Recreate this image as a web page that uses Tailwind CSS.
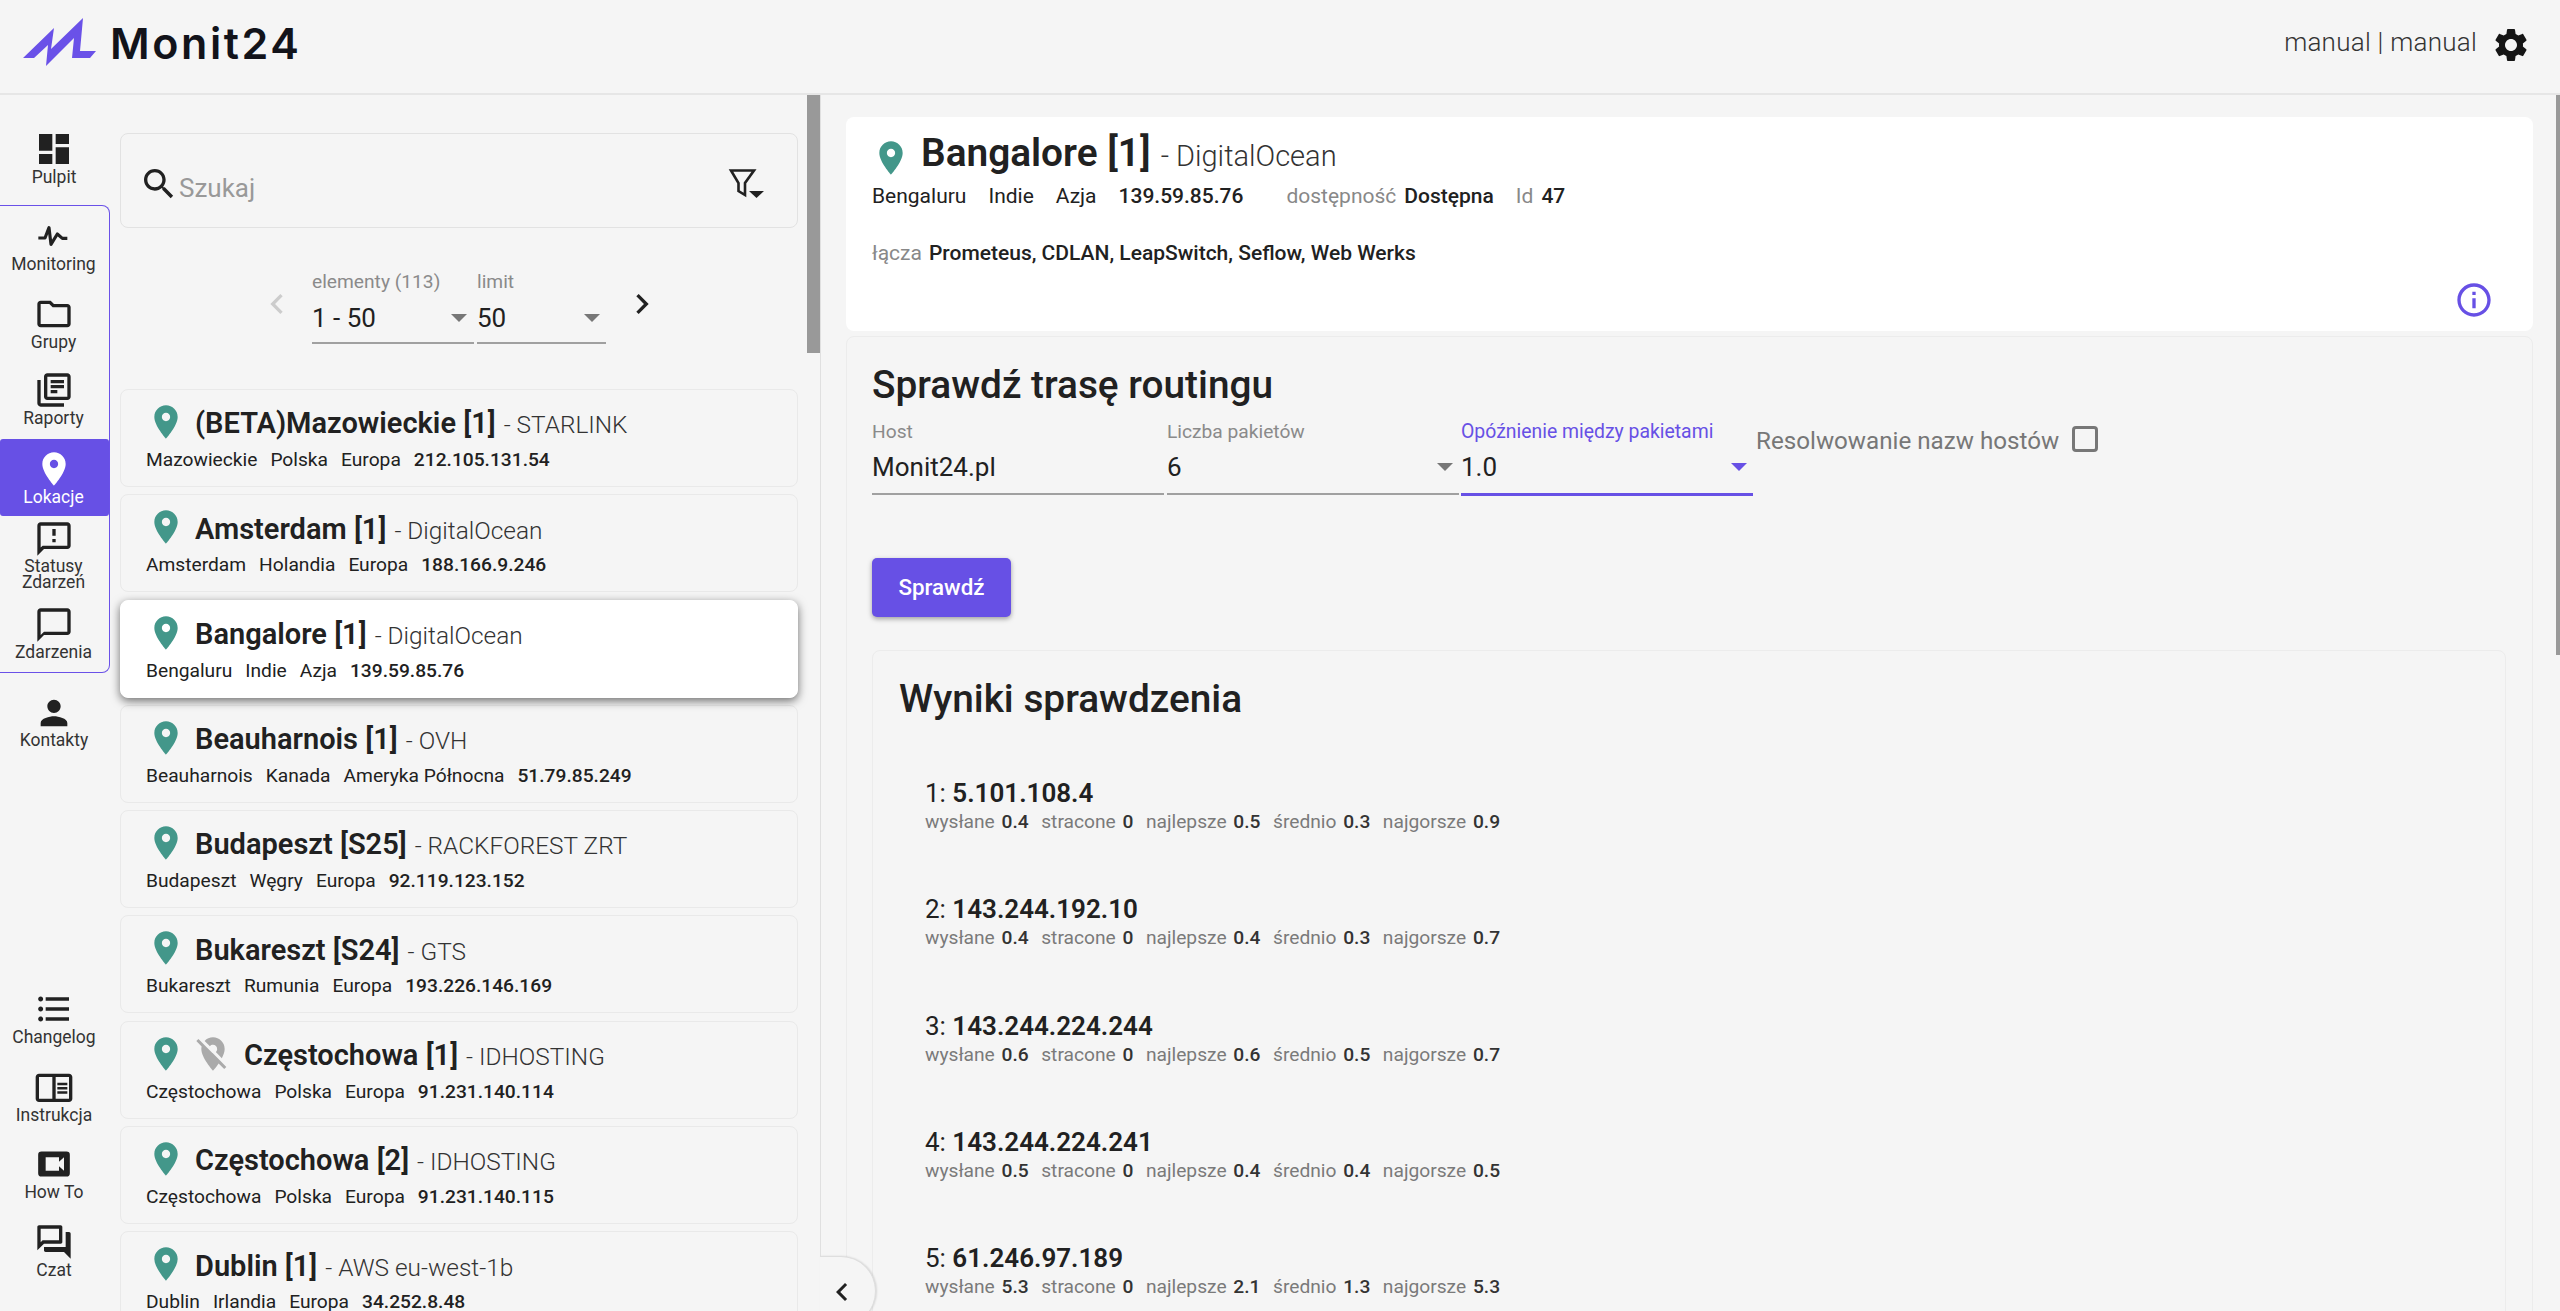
<!DOCTYPE html>
<html lang="pl">
<head>
    <meta charset="UTF-8">
    <title>Monit24</title>
    <script src="https://cdn.jsdelivr.net/npm/@tailwindcss/browser@4"></script>
</head>
<body class="bg-[#f5f5f5] font-[Roboto,sans-serif] text-[#212121] h-[1311px] overflow-hidden">
    <!-- icons -->
    <svg class="hidden">
        <symbol id="i-dashboard" viewBox="0 0 24 24"><path d="M3 13h8V3H3v10zm0 8h8v-6H3v6zm10 0h8V11h-8v10zm0-18v6h8V3h-8z"/></symbol>
        <symbol id="i-pulse" viewBox="0 0 24 24"><path fill="none" stroke="currentColor" stroke-width="1.9" stroke-linejoin="round" d="M2.6 13.2H6.6L9 7l1.2 10L14 10.8l3 2.6h3"/></symbol>
        <symbol id="i-folder" viewBox="0 0 24 24"><path d="M9.17 6l2 2H20v10H4V6h5.17M10 4H4c-1.1 0-1.99.9-1.99 2L2 18c0 1.1.9 2 2 2h16c1.1 0 2-.9 2-2V8c0-1.1-.9-2-2-2h-8l-2-2z"/></symbol>
        <symbol id="i-books" viewBox="0 0 24 24"><path d="M4 6H2v14c0 1.1.9 2 2 2h14v-2H4V6zm16-4H8c-1.1 0-2 .9-2 2v12c0 1.1.9 2 2 2h12c1.1 0 2-.9 2-2V4c0-1.1-.9-2-2-2zm0 14H8V4h12v12zM10 9h8v2h-8zm0 3h4v2h-4zm0-6h8v2h-8z"/></symbol>
        <symbol id="i-place" viewBox="0 0 24 24"><path d="M12 2C8.13 2 5 5.13 5 9c0 5.25 7 13 7 13s7-7.75 7-13c0-3.87-3.13-7-7-7zm0 9.5c-1.38 0-2.5-1.12-2.5-2.5s1.12-2.5 2.5-2.5 2.5 1.12 2.5 2.5-1.12 2.5-2.5 2.5z"/></symbol>
        <symbol id="i-place-off" viewBox="0 0 24 24"><path d="M12 6.5c1.38 0 2.5 1.12 2.5 2.5 0 .74-.33 1.39-.83 1.85l3.63 3.63c.98-1.86 1.7-3.8 1.7-5.48 0-3.87-3.13-7-7-7-1.98 0-3.76.83-5.03 2.15l3.19 3.19c.46-.52 1.11-.84 1.84-.84zm4.37 9.6l-4.63-4.63-.11-.11L3.27 3 2 4.27l3.18 3.18C5.07 7.95 5 8.47 5 9c0 5.25 7 13 7 13s1.67-1.85 3.38-4.35L18.73 21 20 19.73l-3.63-3.63z"/></symbol>
        <symbol id="i-sms" viewBox="0 0 24 24"><path d="M20 2H4c-1.1 0-1.99.9-1.99 2L2 22l4-4h14c1.1 0 2-.9 2-2V4c0-1.1-.9-2-2-2zm0 14H5.17L4 17.17V4h16v12zM11 12h2v2h-2zm0-6h2v4h-2z"/></symbol>
        <symbol id="i-chat" viewBox="0 0 24 24"><path d="M20 2H4c-1.1 0-2 .9-2 2v18l4-4h14c1.1 0 2-.9 2-2V4c0-1.1-.9-2-2-2zm0 14H6l-2 2V4h16v12z"/></symbol>
        <symbol id="i-person" viewBox="0 0 24 24"><path d="M12 12c2.21 0 4-1.79 4-4s-1.79-4-4-4-4 1.79-4 4 1.79 4 4 4zm0 2c-2.67 0-8 1.34-8 4v2h16v-2c0-2.66-5.33-4-8-4z"/></symbol>
        <symbol id="i-list" viewBox="0 0 24 24"><path d="M4 10.5c-.83 0-1.5.67-1.5 1.5s.67 1.5 1.5 1.5 1.5-.67 1.5-1.5-.67-1.5-1.5-1.5zm0-6c-.83 0-1.5.67-1.5 1.5S3.17 7.5 4 7.5 5.5 6.83 5.5 6 4.83 4.5 4 4.5zm0 12c-.83 0-1.5.68-1.5 1.5s.68 1.5 1.5 1.5 1.5-.68 1.5-1.5-.67-1.5-1.5-1.5zM7 19h14v-2H7v2zm0-6h14v-2H7v2zm0-8v2h14V5H7z"/></symbol>
        <symbol id="i-reader" viewBox="0 0 24 24"><path d="M21 4H3c-1.1 0-2 .9-2 2v13c0 1.1.9 2 2 2h18c1.1 0 2-.9 2-2V6c0-1.1-.9-2-2-2zM3 19V6h8v13H3zm18 0h-8V6h8v13zm-7-9.5h6V11h-6zm0 2.5h6v1.5h-6zm0 2.5h6V16h-6z"/></symbol>
        <symbol id="i-video" viewBox="0 0 24 24"><path fill-rule="evenodd" d="M4.500 4.500h15a2 2 0 0 1 2 2v11a2 2 0 0 1-2 2h-15a2 2 0 0 1-2-2v-11a2 2 0 0 1 2-2zM7 8v8h8v-2.600l3 2.600V8l-3 2.600V8z"/></symbol>
        <symbol id="i-forum" viewBox="0 0 24 24"><path d="M15 4v7H5.17L4 12.17V4h11m1-2H3c-.55 0-1 .45-1 1v14l4-4h10c.55 0 1-.45 1-1V3c0-.55-.45-1-1-1zm5 4h-2v9H6v2c0 .55.45 1 1 1h11l4 4V7c0-.55-.45-1-1-1z"/></symbol>
        <symbol id="i-search" viewBox="0 0 24 24"><path d="M15.5 14h-.79l-.28-.27C15.41 12.59 16 11.11 16 9.5 16 5.91 13.09 3 9.5 3S3 5.91 3 9.5 5.91 16 9.5 16c1.61 0 3.09-.59 4.23-1.57l.27.28v.79l5 4.99L20.49 19l-4.99-5zm-6 0C7.01 14 5 11.99 5 9.5S7.01 5 9.5 5 14 7.01 14 9.5 11.99 14 9.5 14z"/></symbol>
        <symbol id="i-gear" viewBox="0 0 24 24"><path d="M19.14 12.94c.04-.3.06-.61.06-.94 0-.32-.02-.64-.07-.94l2.03-1.58c.18-.14.23-.41.12-.61l-1.92-3.32c-.12-.22-.37-.29-.59-.22l-2.39.96c-.5-.38-1.03-.7-1.62-.94l-.36-2.54c-.04-.24-.24-.41-.48-.41h-3.84c-.24 0-.43.17-.47.41l-.36 2.54c-.59.24-1.13.57-1.62.94l-2.39-.96c-.22-.08-.47 0-.59.22L2.74 8.87c-.12.21-.08.47.12.61l2.03 1.58c-.05.3-.09.63-.09.94s.02.64.07.94l-2.03 1.58c-.18.14-.23.41-.12.61l1.92 3.32c.12.22.37.29.59.22l2.39-.96c.5.38 1.03.7 1.62.94l.36 2.54c.05.24.24.41.48.41h3.84c.24 0 .44-.17.47-.41l.36-2.54c.59-.24 1.13-.56 1.62-.94l2.39.96c.22.08.47 0 .59-.22l1.92-3.32c.12-.22.07-.47-.12-.61l-2.01-1.58zM12 15.6c-1.98 0-3.6-1.62-3.6-3.6s1.62-3.6 3.6-3.6 3.6 1.62 3.6 3.6-1.62 3.6-3.6 3.6z"/></symbol>
        <symbol id="i-info" viewBox="0 0 24 24"><path d="M11 7h2v2h-2zm0 4h2v6h-2zm1-9C6.48 2 2 6.48 2 12s4.48 10 10 10 10-4.48 10-10S17.52 2 12 2zm0 18c-4.41 0-8-3.59-8-8s3.59-8 8-8 8 3.59 8 8-3.59 8-8 8z"/></symbol>
        <symbol id="i-left" viewBox="0 0 24 24"><path d="M15.41 7.41L14 6l-6 6 6 6 1.41-1.41L10.83 12z"/></symbol>
        <symbol id="i-right" viewBox="0 0 24 24"><path d="M10 6L8.59 7.41 13.17 12l-4.58 4.59L10 18l6-6z"/></symbol>
    </svg>

    <!-- top bar -->
    <header class="h-[95px] border-b-2 border-[#e6e6e6] flex items-center justify-between">
        <div class="flex items-center">
            <svg class="w-[100px] h-[80px] ml-[10px] -mt-[14px] fill-[#6a51e8]" viewBox="10 0 100 80"><path d="M23 58L54 28 51 49 83 18 80 51 96 51 90 58 72 58 74 38 46 66 48 45 34 58z"/></svg>
            <span class="font-[Inter,sans-serif] font-semibold text-[43px] leading-none tracking-[2.6px] text-[#12131a] -mt-[6px]">Monit24</span>
        </div>
        <div class="flex items-center pr-[29px] -mt-[3px]">
            <span class="text-[26px] font-light text-[#333] tracking-[0.25px] mr-[14px] -mt-[6px]">manual | manual</span>
            <svg class="w-10 h-10 fill-[#151515]"><use href="#i-gear"/></svg>
        </div>
    </header>

    <div class="flex h-[1216px] relative">
        <!-- sidebar -->
        <nav class="w-[110px] shrink-0 flex flex-col text-[17.5px] leading-[16px] text-center fill-[#212121] text-[#333]">
            <a class="h-[110px] pt-[34px] pr-[2px] flex flex-col items-center"><svg class="w-10 h-10 shrink-0"><use href="#i-dashboard"/></svg>Pulpit</a>
            <div class="border border-[#6a51e8] rounded-[8px] rounded-l-none border-l-0 h-[468px] flex flex-col">
                <div class="h-[78px] pt-[10px] pr-[2px] flex flex-col items-center"><svg class="w-10 h-10 shrink-0 text-[#212121]"><use href="#i-pulse"/></svg>Monitoring</div>
                <div class="h-[78px] pt-[10px] pr-[2px] flex flex-col items-center"><svg class="w-10 h-10 shrink-0"><use href="#i-folder"/></svg>Grupy</div>
                <div class="h-[77px] pt-[8px] pr-[2px] flex flex-col items-center"><svg class="w-10 h-10 shrink-0"><use href="#i-books"/></svg>Raporty</div>
                <div class="h-[77px] pt-[10px] pr-[2px] flex flex-col items-center bg-[#6750e5] text-white fill-white rounded-[3px]"><svg class="w-10 h-10 shrink-0"><use href="#i-place"/></svg>Lokacje</div>
                <div class="h-[89px] pt-[3px] pr-[2px] flex flex-col items-center"><svg class="w-10 h-10 shrink-0 -mb-[1px]"><use href="#i-sms"/></svg>Statusy<br>Zdarzeń</div>
                <div class="h-[65px] pr-[2px] flex flex-col items-center"><svg class="w-10 h-10 shrink-0 -mb-[1px]"><use href="#i-chat"/></svg>Zdarzenia</div>
            </div>
            <div class="mt-[20px] pr-[2px] flex flex-col items-center"><svg class="w-10 h-10 shrink-0 -mb-[1px]"><use href="#i-person"/></svg>Kontakty</div>
            <div class="mt-auto pb-[12px]">
                <div class="h-[77.5px] pr-[2px] flex flex-col items-center"><svg class="w-10 h-10 shrink-0"><use href="#i-list"/></svg>Changelog</div>
                <div class="h-[77.5px] pr-[2px] flex flex-col items-center"><svg class="w-10 h-10 shrink-0"><use href="#i-reader"/></svg>Instrukcja</div>
                <div class="h-[77.5px] pr-[2px] flex flex-col items-center"><svg class="w-10 h-10 shrink-0"><use href="#i-video"/></svg>How To</div>
                <div class="h-[77.5px] pr-[2px] flex flex-col items-center"><svg class="w-10 h-10 shrink-0"><use href="#i-forum"/></svg>Czat</div>
            </div>
        </nav>

        <!-- location list -->
        <section class="w-[711px] shrink-0 border-r border-[#e0e0e0] flex overflow-hidden">
            <div class="w-[688px] pl-[10px] shrink-0">
                <div class="w-[678px] h-[95px] mt-[38px] border border-[#e2e2e2] rounded-[8px] flex items-center pl-[18px] pr-[29px]">
                    <svg class="w-10 h-10 fill-[#212121] mt-[7px]"><use href="#i-search"/></svg>
                    <span class="text-[26px] text-[#999] flex-1 mt-[15px]">Szukaj</span>
                    <svg class="w-10 h-8 fill-[#212121] mt-[6px]" viewBox="0 0 40 32"><path d="M3 2.500H26L17 15V27L10.500 23V15Z" fill="none" stroke="#212121" stroke-width="2.6"/><path d="M21 23h15l-7.500 7z"/></svg>
                </div>
                <div class="h-[161px] pl-[137px] flex items-start">
                    <svg class="w-10 h-10 fill-[#ccc] mt-[56px] mr-[15px]"><use href="#i-left"/></svg>
                    <div class="w-[162px] mt-[42px] mr-[3px]">
                        <div class="text-[19.200px] leading-[24px] text-[#8a8a8a]">elementy (113)</div>
                        <div class="h-[50px] border-b-2 border-[#a0a0a0] flex items-center justify-between pr-[7px] text-[26px] leading-none"><span>1 - 50</span><span class="w-0 h-0 border-x-[8px] border-x-transparent border-t-[8px] border-t-[#777]"></span></div>
                    </div>
                    <div class="w-[129px] mt-[42px]">
                        <div class="text-[19.200px] leading-[24px] text-[#8a8a8a]">limit</div>
                        <div class="h-[50px] border-b-2 border-[#a0a0a0] flex items-center justify-between pr-[6px] text-[26px] leading-none"><span>50</span><span class="w-0 h-0 border-x-[8px] border-x-transparent border-t-[8px] border-t-[#777]"></span></div>
                    </div>
                    <svg class="w-10 h-10 fill-[#212121] mt-[56px] ml-[16px]"><use href="#i-right"/></svg>
                </div>
                <div id="list" class="w-[678px] flex flex-col gap-[7.3px]"></div>
            </div>
            <div class="w-[13px] ml-auto h-[258px] bg-[#999] shrink-0"></div>
        </section>

        <!-- details -->
        <main class="flex-1 pl-[25px] pr-[27px] pt-[22px] overflow-hidden">
            <div class="h-[214px] bg-white rounded-[8px] pl-[26px] pt-[21px] relative">
                <div class="flex items-center h-10 -ml-[1px]">
                    <svg class="w-10 h-10 fill-[#43978a] mr-[10px]"><use href="#i-place"/></svg>
                    <div class="flex items-baseline mb-[3px]">
                        <span class="text-[38.8px] font-semibold leading-none">Bangalore [1]</span>
                        <span class="text-[29px] font-light text-[#333] ml-[10px]">- DigitalOcean</span>
                    </div>
                </div>
                <div class="flex text-[21px] leading-[24px] mt-[6px]">
                    <span class="mr-[22px]">Bengaluru</span><span class="mr-[22px]">Indie</span><span class="mr-[22px]">Azja</span>
                    <b class="font-medium mr-[43px]">139.59.85.76</b>
                    <span class="text-[#888] mr-[8px]">dostępność</span><b class="font-medium mr-[22px]">Dostępna</b>
                    <span class="text-[#888] mr-[8px]">Id</span><b class="font-medium">47</b>
                </div>
                <div class="flex text-[21px] leading-[24px] mt-[33px]">
                    <span class="text-[#888] mr-[7px]">łącza</span><b class="font-medium">Prometeus, CDLAN, LeapSwitch, Seflow, Web Werks</b>
                </div>
                <svg class="absolute right-[39px] bottom-[11px] w-10 h-10 fill-[#6750e5]"><use href="#i-info"/></svg>
            </div>
            <div class="mt-[5px] border border-[#ececec] rounded-[8px] pl-[25px] pr-[26px] pt-[24px]">
                <h1 class="text-[38.800px] font-medium leading-[48px]">Sprawdź trasę routingu</h1>
                <div class="flex items-start mt-[13px]">
                    <div class="w-[292px] mr-[3px]">
                        <div class="text-[19.200px] leading-[20px] text-[#8a8a8a]">Host</div>
                        <div class="h-[47px] mt-[6px] border-b-2 border-[#a0a0a0] pt-[1px] text-[26px] leading-[36px]">Monit24.pl</div>
                    </div>
                    <div class="w-[292px] mr-[2px]">
                        <div class="text-[19.200px] leading-[20px] text-[#8a8a8a]">Liczba pakietów</div>
                        <div class="h-[47px] mt-[6px] border-b-2 border-[#a0a0a0] pr-[6px] text-[26px] leading-[36px] flex items-center justify-between pb-[7px]"><span>6</span><span class="w-0 h-0 border-x-[8px] border-x-transparent border-t-[8px] border-t-[#777]"></span></div>
                    </div>
                    <div class="w-[292px] mr-[3px]">
                        <div class="text-[19.400px] leading-[20px] text-[#6750e5]">Opóźnienie między pakietami</div>
                        <div class="h-[48px] mt-[6px] border-b-[3px] border-[#6750e5] pr-[6px] text-[26px] leading-[36px] flex items-center justify-between pb-[7px]"><span>1.0</span><span class="w-0 h-0 border-x-[8px] border-x-transparent border-t-[8px] border-t-[#6750e5]"></span></div>
                    </div>
                    <span class="text-[24.2px] leading-[28px] text-[#777] mt-[5px] mr-[13px]">Resolwowanie nazw hostów</span>
                    <span class="w-[26px] h-[26px] border-[3px] border-[#777] rounded-[4px] mt-[4px]"></span>
                </div>
                <button class="block w-[139px] h-[59px] mt-[62px] bg-[#6750e5] text-white text-[22.400px] font-medium rounded-[5px] shadow-[0_2px_5px_rgba(0,0,0,0.35)]">Sprawdź</button>
                <div class="mt-[33px] border border-[#ececec] rounded-t-[8px] pl-[26px] pt-[24px]">
                    <h2 class="text-[38.800px] font-medium leading-[48px]">Wyniki sprawdzenia</h2>
                    <div id="hops" class="mt-[54px] pl-[26px]"></div>
                </div>
            </div>
        </main>

        <!-- collapse tab and page scrollbar -->
        <div class="absolute left-[820px] top-[1161px] w-[56px] h-[70px] bg-[#f5f5f5] border-t border-r border-[#dedede] rounded-tr-[38px] rounded-br-[38px] shadow-[1px_0_2px_rgba(0,0,0,0.12)] flex items-center">
            <svg class="w-9 h-9 fill-[#212121] ml-[4px]"><use href="#i-left"/></svg>
        </div>
        <div class="absolute right-0 top-0 w-[4px] h-[560px] bg-[#999]"></div>
    </div>

    <script>
        const locations = [
            ['(BETA)Mazowieckie [1]', 'STARLINK', 'Mazowieckie', 'Polska', 'Europa', '212.105.131.54'],
            ['Amsterdam [1]', 'DigitalOcean', 'Amsterdam', 'Holandia', 'Europa', '188.166.9.246'],
            ['Bangalore [1]', 'DigitalOcean', 'Bengaluru', 'Indie', 'Azja', '139.59.85.76', 'selected'],
            ['Beauharnois [1]', 'OVH', 'Beauharnois', 'Kanada', 'Ameryka Północna', '51.79.85.249'],
            ['Budapeszt [S25]', 'RACKFOREST ZRT', 'Budapeszt', 'Węgry', 'Europa', '92.119.123.152'],
            ['Bukareszt [S24]', 'GTS', 'Bukareszt', 'Rumunia', 'Europa', '193.226.146.169'],
            ['Częstochowa [1]', 'IDHOSTING', 'Częstochowa', 'Polska', 'Europa', '91.231.140.114', 'off'],
            ['Częstochowa [2]', 'IDHOSTING', 'Częstochowa', 'Polska', 'Europa', '91.231.140.115'],
            ['Dublin [1]', 'AWS eu-west-1b', 'Dublin', 'Irlandia', 'Europa', '34.252.8.48'],
        ];

        document.getElementById('list').innerHTML = locations.map(([name, host, city, country, region, ip, flag]) => `
            <div class="${flag === 'selected' ? 'bg-white shadow-[0_3px_10px_rgba(0,0,0,0.55)] border-white relative' : 'border-[#e9e9e9]'} h-[98px] shrink-0 border rounded-[8px] pl-[25px] pt-[12px]">
                <div class="flex items-center h-10">
                    <svg class="w-10 h-10 fill-[#43978a] mr-[9px] shrink-0"><use href="#i-place"/></svg>
                    ${flag === 'off' ? '<svg class="w-10 h-10 fill-[#aaa] -ml-[2px] mr-[11px] shrink-0"><use href="#i-place-off"/></svg>' : ''}
                    <div class="flex items-baseline mt-[7px]">
                        <span class="text-[29px] font-semibold leading-none">${name}</span>
                        <span class="text-[24.400px] font-light text-[#333] ml-[8px]">- ${host}</span>
                    </div>
                </div>
                <div class="flex gap-[13px] text-[19.200px] leading-[24px] mt-[6px]">
                    <span>${city}</span><span>${country}</span><span>${region}</span><b class="font-medium">${ip}</b>
                </div>
            </div>`).join('');

        const hops = [
            ['1', '5.101.108.4', '0.4', '0', '0.5', '0.3', '0.9'],
            ['2', '143.244.192.10', '0.4', '0', '0.4', '0.3', '0.7'],
            ['3', '143.244.224.244', '0.6', '0', '0.6', '0.5', '0.7'],
            ['4', '143.244.224.241', '0.5', '0', '0.4', '0.4', '0.5'],
            ['5', '61.246.97.189', '5.3', '0', '2.1', '1.3', '5.3'],
        ];
        const statLabels = ['wysłane', 'stracone', 'najlepsze', 'średnio', 'najgorsze'];

        document.getElementById('hops').innerHTML = hops.map(([no, ip, ...values]) => `
            <div class="h-[116.300px]">
                <div class="text-[26px] leading-[33px]">${no}: <b class="font-semibold">${ip}</b></div>
                <div class="flex gap-[12.500px] text-[19.200px] leading-[24px]">
                    ${values.map((v, i) => `<span class="text-[#7a7a7a]">${statLabels[i]} <b class="font-medium text-[#333] ml-[2px]">${v}</b></span>`).join('')}
                </div>
            </div>`).join('');
    </script>
</body>
</html>
